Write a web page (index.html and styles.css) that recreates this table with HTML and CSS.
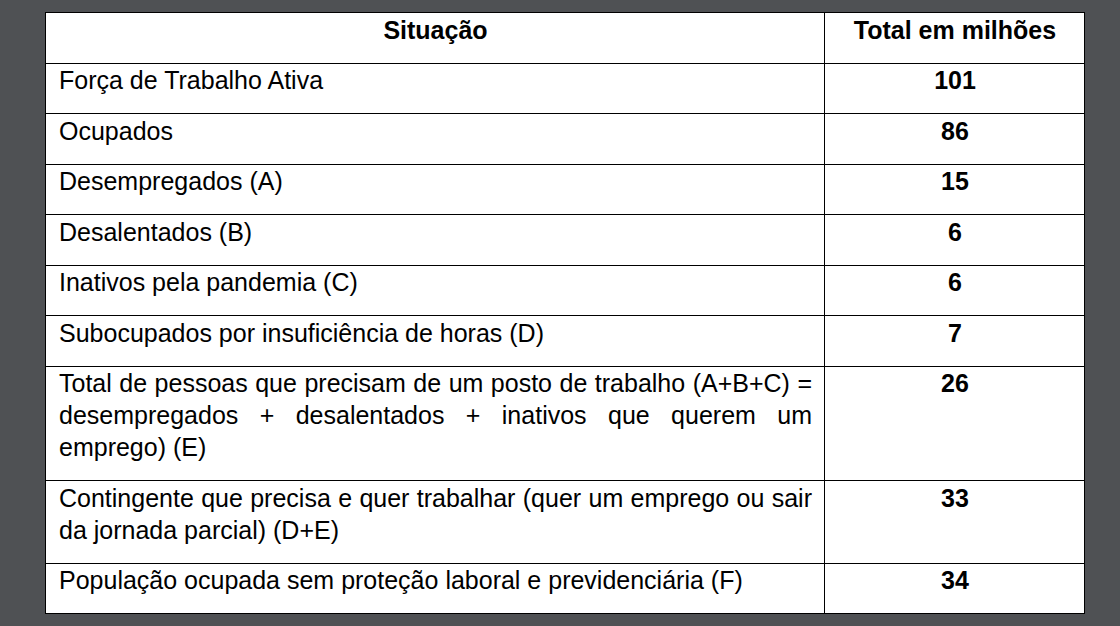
FILE: index.html
```html
<!DOCTYPE html>
<html lang="pt">
<head>
<meta charset="utf-8">
<title>Tabela</title>
<link rel="stylesheet" href="styles.css">
</head>
<body>
<div class="page">
  <table class="data">
    <colgroup>
      <col class="c-label">
      <col class="c-value">
    </colgroup>
    <thead>
      <tr><th>Situação</th><th>Total em milhões</th></tr>
    </thead>
    <tbody>
      <tr><td class="label">Força de Trabalho Ativa</td><td class="value">101</td></tr>
      <tr><td class="label">Ocupados</td><td class="value">86</td></tr>
      <tr><td class="label">Desempregados (A)</td><td class="value">15</td></tr>
      <tr><td class="label">Desalentados (B)</td><td class="value">6</td></tr>
      <tr><td class="label">Inativos pela pandemia (C)</td><td class="value">6</td></tr>
      <tr><td class="label">Subocupados por insuficiência de horas (D)</td><td class="value">7</td></tr>
      <tr><td class="label">Total de pessoas que precisam de um posto de trabalho (A+B+C) = desempregados + desalentados + inativos que querem um emprego) (E)</td><td class="value">26</td></tr>
      <tr><td class="label">Contingente que precisa e quer trabalhar (quer um emprego ou sair da jornada parcial) (D+E)</td><td class="value">33</td></tr>
      <tr><td class="label">População ocupada sem proteção laboral e previdenciária (F)</td><td class="value">34</td></tr>
    </tbody>
  </table>
</div>
</body>
</html>
```

FILE: styles.css
```css
html, body {
  margin: 0;
  padding: 0;
}
body {
  background: #4f5154;
  width: 1120px;
  height: 626px;
  overflow: hidden;
  font-family: "Liberation Sans", Arial, sans-serif;
}
.page {
  padding: 12px 0 0 45px;
}
.data {
  border-collapse: collapse;
  table-layout: fixed;
  width: 1039px;
  background: #ffffff;
  color: #000000;
  font-size: 25px;
  line-height: 32px;
}
.c-label { width: 779px; }
.c-value { width: 260px; }
.data th,
.data td {
  border: 1px solid #000000;
  padding: 0.5px 12px 17px 13px;
  vertical-align: top;
}
.data th {
  font-weight: bold;
  text-align: center;
}
.data td.label {
  text-align: justify;
}
.data td.value {
  font-weight: bold;
  text-align: center;
}
```
